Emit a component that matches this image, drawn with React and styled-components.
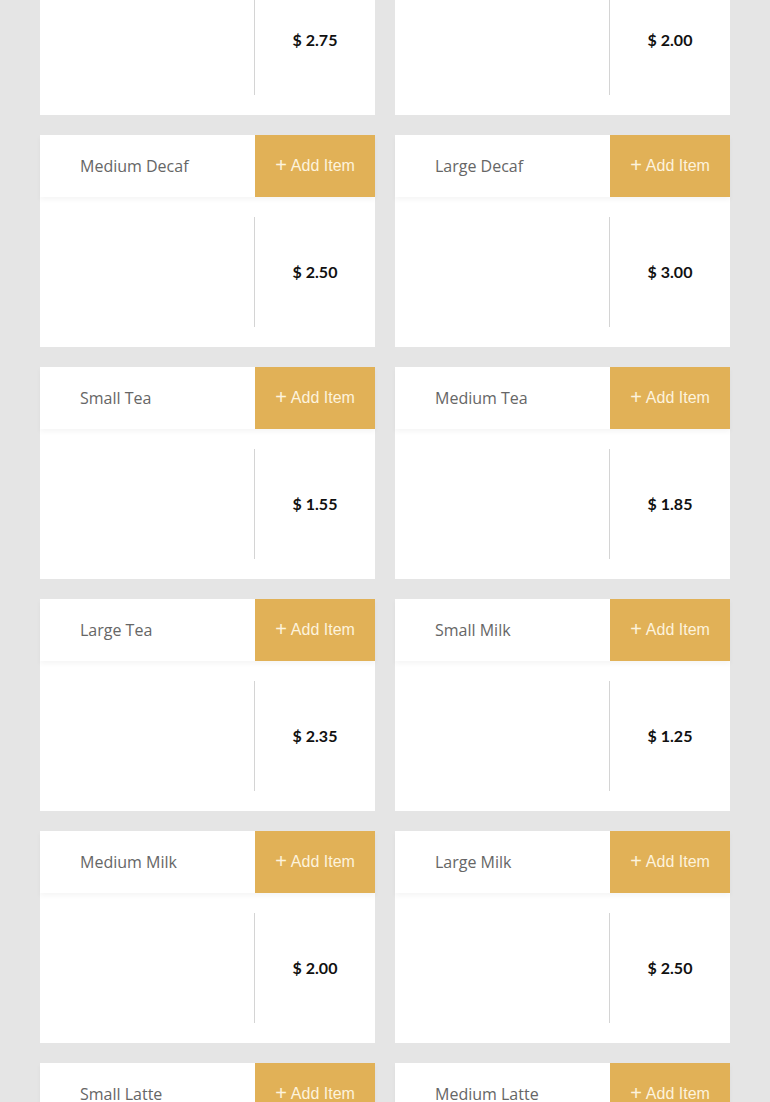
import React from 'react'
import styled, { createGlobalStyle } from 'styled-components'

const items = [
  { name: 'Large Coffee', price: '2.75' },
  { name: 'Small Decaf', price: '2.00' },
  { name: 'Medium Decaf', price: '2.50' },
  { name: 'Large Decaf', price: '3.00' },
  { name: 'Small Tea', price: '1.55' },
  { name: 'Medium Tea', price: '1.85' },
  { name: 'Large Tea', price: '2.35' },
  { name: 'Small Milk', price: '1.25' },
  { name: 'Medium Milk', price: '2.00' },
  { name: 'Large Milk', price: '2.50' },
  { name: 'Small Latte', price: '2.75' },
  { name: 'Medium Latte', price: '3.25' },
]

const App = () => (
  <>
    <GlobalStyle />
    <Grid>
      {items.map((item) => (
        <Card key={item.name}>
          <Header>
            <Name>{item.name}</Name>
            <AddButton>
              <Plus>+</Plus>
              Add Item
            </AddButton>
          </Header>
          <Body>
            <Details />
            <Price>$ {item.price}</Price>
          </Body>
        </Card>
      ))}
    </Grid>
  </>
)

export default App

const GlobalStyle = createGlobalStyle`
  body {
    margin: 0;
    background: #e5e5e5;
    font-family: 'Open Sans', sans-serif;
    overflow: hidden;
  }
`

// page is shown scrolled: first row sits partly above the top edge
const Grid = styled.div`
  display: grid;
  grid-template-columns: 335px 335px;
  gap: 20px;
  padding: 0 40px;
  margin-top: -97px;
`

const Card = styled.div`
  background: #fff;
  height: 212px;
  display: flex;
  flex-direction: column;
`

const Header = styled.div`
  display: flex;
  height: 62px;
  position: relative;
  box-shadow: 0 3px 5px rgba(0, 0, 0, 0.04);
`

const Name = styled.div`
  flex: 1;
  display: flex;
  align-items: center;
  padding-left: 40px;
  font-size: 16px;
  color: #666;
`

const AddButton = styled.button`
  width: 120px;
  border: none;
  background: #e1b157;
  color: #fdf3dd;
  font-family: 'Liberation Sans', Arial, sans-serif;
  font-size: 16px;
  display: flex;
  align-items: center;
  justify-content: center;
  gap: 4px;
  padding: 0;
  cursor: pointer;
`

const Plus = styled.span`
  font-size: 20px;
  font-weight: 300;
  line-height: 1;
  margin-top: -3px;
`

const Body = styled.div`
  flex: 1;
  display: flex;
  padding: 20px 0;
`

const Details = styled.div`
  width: 214px;
  border-right: 1px solid #d4d4d4;
`

const Price = styled.div`
  flex: 1;
  display: flex;
  align-items: center;
  justify-content: center;
  padding-bottom: 2px;
  font-family: Lato, sans-serif;
  font-weight: 700;
  font-size: 16px;
  color: #111;
`
